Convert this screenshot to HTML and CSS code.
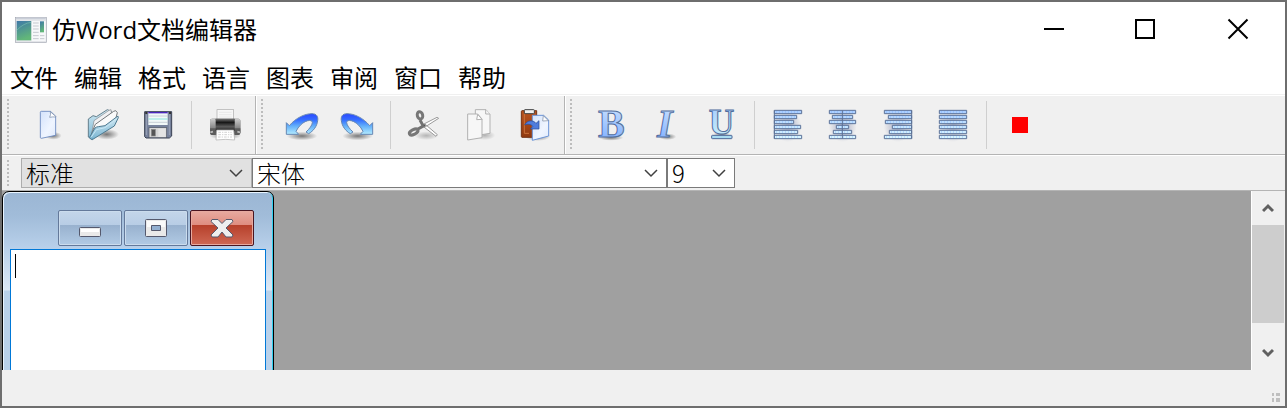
FILE: index.html
```html
<!DOCTYPE html>
<html lang="zh-CN">
<head>
<meta charset="utf-8">
<title>仿Word文档编辑器</title>
<link rel="stylesheet" href="styles.css">
</head>
<body>
<svg class="defs" aria-hidden="true">
  <defs>
    <linearGradient id="paper" x1="0" y1="0" x2="1" y2="1"><stop offset="0" stop-color="#d3e2fb"/><stop offset=".6" stop-color="#eff5ff"/><stop offset="1" stop-color="#dfeafd"/></linearGradient>
    <linearGradient id="folder" x1="0" y1="0" x2="0" y2="1"><stop offset="0" stop-color="#d3eaf4"/><stop offset="1" stop-color="#79b5d2"/></linearGradient>
    <linearGradient id="arrow" x1="0" y1="0" x2="0" y2="1"><stop offset="0" stop-color="#2a48ff"/><stop offset=".3" stop-color="#356dff"/><stop offset=".6" stop-color="#63b0fa"/><stop offset="1" stop-color="#b4ecff"/></linearGradient>
    <linearGradient id="letter" x1="0" y1="0" x2="0" y2="1"><stop offset="0" stop-color="#d0e5ff"/><stop offset="1" stop-color="#76a9ff"/></linearGradient>
    <linearGradient id="letterCyan" x1="0" y1="0" x2="0" y2="1"><stop offset="0" stop-color="#a6caff"/><stop offset="1" stop-color="#c8f2f8"/></linearGradient>
    <linearGradient id="bars" gradientUnits="userSpaceOnUse" x1="0" y1="54" x2="0" y2="140"><stop offset="0" stop-color="#a9cdff"/><stop offset="1" stop-color="#daf7ff"/></linearGradient>
    <linearGradient id="roller" x1="0" y1="0" x2="0" y2="1"><stop offset="0" stop-color="#777"/><stop offset=".3" stop-color="#171717"/><stop offset=".65" stop-color="#5b5b5b"/><stop offset="1" stop-color="#222"/></linearGradient>
    <linearGradient id="rollerEnd" x1="0" y1="0" x2="0" y2="1"><stop offset="0" stop-color="#ccc"/><stop offset="1" stop-color="#555"/></linearGradient>
    <linearGradient id="leather" x1="0" y1="0" x2="0" y2="1"><stop offset="0" stop-color="#b9531f"/><stop offset="1" stop-color="#8f390f"/></linearGradient>
    <linearGradient id="screen" x1="0" y1="0" x2=".3" y2="1"><stop offset="0" stop-color="#3f78a8"/><stop offset="1" stop-color="#62b779"/></linearGradient>
    <radialGradient id="shade"><stop offset="0" stop-color="#000" stop-opacity=".5"/><stop offset="1" stop-color="#000" stop-opacity="0"/></radialGradient>
    <radialGradient id="glow"><stop offset="0" stop-color="#1c2c70" stop-opacity=".35"/><stop offset="1" stop-color="#1c2c70" stop-opacity="0"/></radialGradient>
  </defs>
</svg>
<div class="window">
  <header class="titlebar">
    <svg class="app-icon" viewBox="0 0 96 78" aria-hidden="true">
      <rect x="1" y="1" width="93" height="75" fill="#e3e5e9" stroke="#a2a7b2" stroke-width="2"/>
      <path d="M3 4H92" stroke="#c9ced8" stroke-width="5"/>
      <rect x="5" y="12" width="44" height="58" fill="url(#screen)"/>
      <path d="M5 40Q26 18 49 16" stroke="#7cc3b0" stroke-width="3" fill="none" opacity=".6"/>
      <rect x="50" y="12" width="42" height="60" fill="#f7f8fa"/>
      <path d="M54 18h17M54 27h17M54 36h17M54 46h17M54 56h17M54 65h17M75 56h13M75 65h13" stroke="#c5c9cf" stroke-width="3"/>
      <rect x="75" y="13" width="12" height="33" fill="url(#screen)"/>
    </svg>
    <h1 class="title">仿Word文档编辑器</h1>
    <div class="window-controls">
      <button class="control" aria-label="最小化"><svg viewBox="0 0 24 24"><path d="M1 11h20" /></svg></button>
      <button class="control" aria-label="最大化"><svg viewBox="0 0 24 24"><path d="M1 2h18v18H1z"/></svg></button>
      <button class="control" aria-label="关闭"><svg viewBox="0 0 24 24"><path d="M1.500 1.500l19 19M20.500 1.500l-19 19"/></svg></button>
    </div>
  </header>
  <nav class="menu" aria-label="菜单">
    <button>文件</button><button>编辑</button><button>格式</button><button>语言</button><button>图表</button><button>审阅</button><button>窗口</button><button>帮助</button>
  </nav>

  <div class="toolbar">
    <div class="group">
      <span class="grip"></span>
      <button class="tool" aria-label="新建"><svg viewBox="90 45 105 108">
        <ellipse cx="160" cy="131" rx="25" ry="12" fill="url(#shade)"/>
        <path d="M124 58h28l15 15v57l-43 9q-3 0-3-3V61q0-3 3-3z" fill="url(#paper)" stroke="#6383bd" stroke-width="2.500"/>
        <path d="M151 59q2 9-2 17 9-2 18-1V73z" fill="#fff" stroke="#6b7f9f" stroke-width="2"/>
      </svg></button>
      <button class="tool" aria-label="打开"><svg viewBox="255 45 105 108">
        <ellipse cx="320" cy="127" rx="37" ry="16" fill="url(#shade)"/>
        <path d="M265 81l14-10 10 3 33-21 12 5 4 28-61 57-12-8z" fill="url(#folder)" stroke="#647f8c" stroke-width="3"/>
        <path d="M276 120l6-34 45-31 6-2 5 42z" fill="#f1f1f3" stroke="#82878b" stroke-width="2"/>
        <path d="M274 126l12-29 55-39 6-2 5 6-9 34z" fill="#fafafa" stroke="#73777a" stroke-width="3"/>
        <path d="M268 137l17-29q5-4 10-4l20-3 36-27q5-3 4 3l-12 25-63 39q-7 4-12-4z" fill="url(#folder)" stroke="#4e7a91" stroke-width="3"/>
        <path d="M274 135l15-22 26-6 34-25" stroke="#c8e7f5" stroke-width="3" fill="none"/>
      </svg></button>
      <button class="tool" aria-label="保存"><svg viewBox="420 45 105 108">
        <path d="M434 59h81v73l-7 6h-70l-4-4z" fill="#77829c" stroke="#394052" stroke-width="3"/>
        <rect x="445" y="60" width="58" height="39" fill="#f1f8f8"/>
        <path d="M445 62h58" stroke="#4a25bd" stroke-width="4"/>
        <path d="M445 72h58M445 91h58" stroke="#b5bbc7" stroke-width="2"/><path d="M445 81h58" stroke="#8de2de" stroke-width="3"/>
        <path d="M439 67v62M508 67v62" stroke="#9aa3b9" stroke-width="3"/>
        <rect x="436" y="60" width="6" height="6" fill="#333"/><rect x="507" y="60" width="6" height="6" fill="#333"/>
        <rect x="447" y="107" width="53" height="30" fill="#d6d6d6" stroke="#4e5562" stroke-width="2"/>
        <path d="M475 110h22v25h-22z" fill="#e4e4e4"/><rect x="454" y="112" width="12" height="20" fill="#555" stroke="#8a8a8a" stroke-width="2"/>
      </svg></button>
      <span class="separator"></span>
      <button class="tool" aria-label="打印"><svg viewBox="621 45 105 108">
        <ellipse cx="676" cy="131" rx="48" ry="12" fill="url(#shade)"/>
        <rect x="651" y="53" width="50" height="37" fill="#f7f7f7" stroke="#aaa" stroke-width="2"/>
        <path d="M657 61h38M657 68h38M657 75h38" stroke="#e2e2e2" stroke-width="2"/>
        <rect x="630" y="80" width="91" height="48" rx="6" fill="#555"/>
        <rect x="630" y="80" width="18" height="48" rx="5" fill="url(#rollerEnd)"/><rect x="703" y="80" width="18" height="48" rx="5" fill="url(#rollerEnd)"/>
        <path d="M630 109h91v11q-2 9-9 9h-73q-7 0-9-9z" fill="#5c5c5c"/><path d="M631 121l8-2M720 121l-8-2" stroke="#bbb" stroke-width="5"/>
        <rect x="647" y="80" width="57" height="37" fill="url(#roller)"/>
        <path d="M650 114h51l3 30-27-2-29 2z" fill="#fff" stroke="#aaa" stroke-width="2"/>
        <path d="M655 121h40M655 128h41M654 135h42" stroke="#bcbcbc" stroke-width="2" stroke-dasharray="8 3 4 3"/>
      </svg></button>
    </div>
    <div class="group">
      <span class="grip"></span>
      <button class="tool" aria-label="撤销"><svg viewBox="102 45 105 108">
        <ellipse cx="156" cy="132" rx="46" ry="13" fill="url(#shade)"/>
        <path d="M109 92L118 101C138 77 165 65 186 65C200 65 205 74 203 86C201 103 190 117 176 125L168 120C179 110 186 100 187 92C188 79 155 84 138 118L146 127H109Z" fill="url(#arrow)" stroke="#6687b4" stroke-width="3" stroke-linejoin="round"/>
      </svg></button>
      <button class="tool" aria-label="重做"><svg viewBox="267 45 105 108">
        <ellipse cx="323" cy="132" rx="46" ry="13" fill="url(#shade)"/>
        <path d="M368 92L359 101C339 77 312 65 291 65C277 65 272 74 274 86C276 103 287 117 301 125L309 120C298 110 291 100 290 92C289 79 322 84 339 118L331 127H368Z" fill="url(#arrow)" stroke="#6687b4" stroke-width="3" stroke-linejoin="round"/>
      </svg></button>
      <span class="separator"></span>
      <button class="tool" aria-label="剪切"><svg viewBox="48 45 105 108">
        <ellipse cx="109" cy="131" rx="36" ry="13" fill="url(#shade)" opacity=".5"/>
        <path d="M98 98l43-22 5 3-41 26zM99 103l8-5 35 30-4 5z" fill="#fff" stroke="#9a9a9a" stroke-width="3" stroke-linejoin="round"/>
        <ellipse cx="90" cy="70" rx="8" ry="11" transform="rotate(-15 90 70)" fill="none" stroke="#777" stroke-width="9"/>
        <ellipse cx="71" cy="120" rx="14" ry="7" transform="rotate(-27 71 120)" fill="none" stroke="#777" stroke-width="9"/>
        <path d="M90 84l9 17M84 111l18-10" stroke="#737373" stroke-width="9"/><circle cx="104" cy="100" r="3" fill="#555"/>
      </svg></button>
      <button class="tool" aria-label="复制"><svg viewBox="213 45 105 108">
        <ellipse cx="284" cy="130" rx="32" ry="14" fill="url(#shade)" opacity=".5"/>
        <g fill="#f7f7f7" stroke="#b1b1b1" stroke-width="3"><path d="M256 53h32l12 14v57l-44 7z"/><path d="M287 53v13h13"/><path d="M233 66h30l13 15v56l-43 7z"/><path d="M263 67l-3 16 16-1z" fill="#fff"/></g>
      </svg></button>
      <button class="tool" aria-label="粘贴"><svg viewBox="378 45 105 108">
        <ellipse cx="443" cy="133" rx="38" ry="14" fill="url(#shade)"/>
        <path d="M396 56h44v80h-44q-2 0-2-3V59q0-3 2-3z" fill="url(#leather)" stroke="#733315" stroke-width="3"/>
        <path d="M403 65v59h14" stroke="#ca713b" stroke-width="3" fill="none"/>
        <rect x="403" y="53" width="30" height="12" rx="2" fill="#f0f0f0" stroke="#404040" stroke-width="3"/>
        <path d="M427 70h34l15 14v48l-49 13z" fill="url(#paper)" stroke="#6b95d8" stroke-width="3"/>
        <path d="M460 71l-2 16 17-1z" fill="#fff" stroke="#75859c" stroke-width="2"/>
        <path d="M404 99C411 84 430 83 438 94L447 86V111H421L429 103C422 96 413 95 404 99Z" fill="#4f7cdc" stroke="#294a91" stroke-width="2"/>
      </svg></button>
    </div>
    <div class="group group-last">
      <span class="grip"></span>
      <button class="tool" aria-label="加粗"><svg viewBox="99 45 105 108"><ellipse cx="153" cy="137" rx="37" ry="9" fill="url(#shade)"/><text class="glyph bold" x="114" y="136" fill="url(#letter)">B</text></svg></button>
      <button class="tool" aria-label="斜体"><svg viewBox="264 45 105 108"><ellipse cx="322" cy="134" rx="27" ry="10" fill="url(#shade)"/><text class="glyph bold italic" x="291" y="136" fill="url(#letter)">I</text></svg></button>
      <button class="tool" aria-label="下划线"><svg viewBox="429 45 105 108"><ellipse cx="485" cy="126" rx="24" ry="8" fill="url(#shade)"/><text class="glyph under" x="446" y="125" fill="url(#letterCyan)">U</text><rect x="455" y="130" width="61" height="10" rx="2" fill="#a9dcf2" stroke="#4c6797" stroke-width="3"/></svg></button>
      <span class="separator"></span>
      <button class="tool" aria-label="左对齐"><svg class="align" viewBox="60 45 105 108"><ellipse cx="113" cy="103" rx="42" ry="47" fill="url(#glow)"/><path class="line" d="M73 55h82v10H73zM73 70h67v10H73zM73 85h58v10H73zM73 100h79v10H73zM73 115h70v10H73zM73 130h82v10H73z"/><path class="rule" d="M73 55v85"/><path class="dots" d="M78 60h72M78 75h59M78 90h49M78 105h70M78 120h61M78 135h72"/></svg></button>
      <button class="tool" aria-label="居中"><svg class="align" viewBox="225 45 105 108"><ellipse cx="278" cy="103" rx="42" ry="47" fill="url(#glow)"/><path class="line" d="M238 55h79v10h-79zM247 70h61v10h-61zM238 85h79v10h-79zM259 100h37v10h-37zM250 115h55v10h-55zM238 130h79v10h-79z"/><path class="rule" d="M277 55v85"/><path class="dots" d="M243 60h70M252 75h52M243 90h70M264 105h28M255 120h46M243 135h70"/></svg></button>
      <button class="tool" aria-label="右对齐"><svg class="align" viewBox="390 45 105 108"><ellipse cx="443" cy="103" rx="42" ry="47" fill="url(#glow)"/><path class="line" d="M403 55h82v10h-82zM415 70h70v10h-70zM406 85h79v10h-79zM427 100h58v10h-58zM418 115h67v10h-67zM403 130h82v10h-82z"/><path class="rule" d="M485 55v85"/><path class="dots" d="M408 60h73M420 75h61M411 90h70M432 105h49M423 120h58M408 135h73"/></svg></button>
      <button class="tool" aria-label="两端对齐"><svg class="align" viewBox="555 45 105 108"><ellipse cx="609" cy="103" rx="42" ry="47" fill="url(#glow)"/><path class="line" d="M568 55h82v10h-82zM568 70h82v10h-82zM568 85h82v10h-82zM568 100h82v10h-82zM568 115h82v10h-82zM568 130h82v10h-82z"/><path class="dots" d="M573 60h73M573 75h73M573 90h73M573 105h73M573 120h73M573 135h73"/></svg></button>
      <span class="separator"></span>
      <button class="tool" aria-label="文字颜色"><svg viewBox="756 45 105 108"><path d="M786 75h48v48h-48z" fill="#f00"/></svg></button>
    </div>
  </div>

  <div class="formatbar">
    <span class="grip"></span>
    <label class="combo combo-style"><select aria-label="样式"><option>标准</option></select><svg viewBox="0 0 14 9"><path d="M1 1l6 6 6-6"/></svg></label>
    <label class="combo combo-font"><select aria-label="字体"><option>宋体</option></select><svg viewBox="0 0 14 9"><path d="M1 1l6 6 6-6"/></svg></label>
    <label class="combo combo-size"><select aria-label="字号"><option>9</option></select><svg viewBox="0 0 14 9"><path d="M1 1l6 6 6-6"/></svg></label>
  </div>

  <main class="workspace">
    <div class="mdi">
      <section class="child" aria-label="文档">
        <div class="child-bar">
          <button class="child-button" aria-label="最小化文档"><svg viewBox="0 0 64 36"><rect x="21.500" y="17.500" width="21" height="9" rx="1" fill="#e9e9e9" stroke="#55596d"/><path d="M23 19h18v3H23z" fill="#fff"/></svg></button>
          <button class="child-button" aria-label="最大化文档"><svg viewBox="0 0 64 36"><rect x="21.500" y="9.500" width="21" height="17" rx="1" fill="#e9e9e9" stroke="#55596d"/><path d="M23 11h18v6H23z" fill="#fafafa"/><path d="M27.500 15.500h9v5h-9z" fill="#92afd0" stroke="#55596d"/></svg></button>
          <button class="child-button child-close" aria-label="关闭文档"><svg viewBox="0 0 64 36"><path d="M22 9.500h6l4 4 4-4h6l1 2-7 6.500 7 7-1 2h-6l-4-5-4 5h-6l-1-2 7-7-7-6.500z" fill="#eee" stroke="#55596d"/></svg></button>
        </div>
        <div class="page"><textarea aria-label="文档内容"></textarea><span class="caret"></span></div>
      </section>
    </div>
    <div class="scrollbar">
      <button aria-label="向上滚动"><svg viewBox="0 0 12 10"><path d="M1 8l5-5 5 5"/></svg></button>
      <div class="track"><div class="thumb"></div></div>
      <button aria-label="向下滚动"><svg viewBox="0 0 12 10"><path d="M1 2l5 5 5-5"/></svg></button>
    </div>
  </main>
  <footer class="status">
    <svg viewBox="0 0 8 9" aria-hidden="true"><path d="M0 0h2v3H0zM4 0h4v3H4zM0 5h2v4H0zM4 5h4v4H4z" fill="#bfbfbf"/></svg>
  </footer>
</div>
</body>
</html>
```
FILE: styles.css
```css
* { box-sizing: border-box; }

body {
  margin: 0;
  font-family: "Open Sans", "Noto Sans CJK SC", sans-serif;
  font-size: 24px;
  color: #000;
}

button {
  margin: 0;
  padding: 0;
  border: 0;
  background: none;
  font: inherit;
  color: inherit;
}

svg { display: block; flex: none; }
.defs { position: absolute; width: 0; height: 0; }

.window {
  display: flex;
  flex-direction: column;
  height: 100vh;
  border: 2px solid #6e6e6e;
  background: #f0f0f0;
}

/* Title and menu */
.titlebar {
  display: flex;
  align-items: center;
  height: 56px;
  padding-left: 13px;
  background: #fff;
}
.app-icon { width: 32px; height: 26px; }
.title {
  flex: 1;
  margin: 0 0 0 5px;
  font-size: 24px;
  font-weight: 400;
  line-height: 32px;
  white-space: nowrap;
}
.window-controls { display: flex; height: 100%; }
.control {
  display: flex;
  align-items: center;
  justify-content: center;
  width: 92px;
}
.control svg { width: 24px; height: 24px; fill: none; stroke: #000; stroke-width: 2; }

.menu {
  display: flex;
  gap: 16px;
  padding: 4px 8px 0;
  border-bottom: 1px solid #f0f0f0;
  background: #fff;
}
.menu button { height: 32px; line-height: 32px; }

/* Toolbars */
.toolbar, .formatbar {
  display: flex;
  flex: none;
  border-top: 1px solid #fff;
  border-bottom: 1px solid #b4b4b4;
}
.toolbar { height: 60px; }
.group {
  display: flex;
  padding-right: 3px;
  border-right: 1px solid #b4b4b4;
}
.group + .group { box-shadow: inset 1px 0 #fff; }
.group-last { border-right: 0; }
.grip {
  width: 18px;
  margin: 3px 0;
  background: linear-gradient(#bdbdbd 2px, transparent 2px) 5px 0 / 2px 4px repeat-y;
}
.tool {
  display: flex;
  align-items: center;
  justify-content: center;
  width: 55px;
}
.tool svg { width: 35px; height: 36px; overflow: visible; }
.separator {
  width: 1px;
  margin: 5px 5px 5px 6px;
  background: #cfcfcf;
}
.glyph {
  font-family: "Liberation Serif", serif;
  stroke: #526e9e;
  stroke-width: 3px;
}
.bold { font-size: 120px; font-weight: 700; }
.italic { font-style: italic; }
.under { font-size: 106px; font-weight: 700; }
.align .line { fill: url(#bars); stroke: #5c7298; stroke-width: 3px; }
.align .rule { stroke: #5c7298; stroke-width: 3px; }
.align .dots { stroke: #6fa8ff; stroke-width: 3px; stroke-dasharray: 3 6; opacity: .6; }

.formatbar { height: 36px; }
.formatbar .grip { width: 19px; margin: 4px 0 3px; }
.combo {
  position: relative;
  height: 30px;
  margin-top: 2px;
}
.combo select {
  display: block;
  width: 100%;
  height: 30px;
  padding: 0 4px;
  border: 1px solid #7a7a7a;
  border-radius: 0;
  appearance: none;
  background: #fff;
  color: #000;
  font-family: "Noto Sans CJK SC", sans-serif;
  font-size: 24px;
  font-weight: 300;
  line-height: 28px;
}
.combo svg {
  position: absolute;
  top: 11px;
  right: 9px;
  width: 14px;
  height: 9px;
  fill: none;
  stroke: #404040;
  stroke-width: 1.500px;
  pointer-events: none;
}
.combo-style { width: 231px; }
.combo-style select { border-color: #adadad; background: #e1e1e1; }
.combo-font { width: 415px; }
.combo-size { width: 68px; }

/* Documents */
.workspace { display: flex; flex: 1; min-height: 0; }
.mdi {
  position: relative;
  flex: 1;
  overflow: hidden;
  background: #a0a0a0;
}
.child {
  position: absolute;
  top: 0;
  left: 0;
  display: flex;
  flex-direction: column;
  width: 272px;
  height: 300px;
  padding: 0 7px;
  border: 1px solid #000;
  border-radius: 7px 7px 0 0;
  background: linear-gradient(#9bb6d4, #a1bcd9 24px, #b8d0ea 56px, #dce8f5 98px, #b9d1ea 99px);
  box-shadow: inset 1px 1px #e8f4ff, inset -1px 0 #31d0f0;
}
.child-bar {
  display: flex;
  justify-content: flex-end;
  gap: 2px;
  padding: 18px 12px 3px 0;
}
.child-button {
  width: 64px;
  height: 36px;
  overflow: hidden;
  border: 1px solid #64799a;
  border-radius: 2px;
  background: linear-gradient(#c4d6ea, #b8cde5 14px, #98b1ce 14px, #b1cae4);
  box-shadow: inset 0 0 0 1px #cbdced;
}
.child-button svg { width: 64px; height: 36px; margin: -1px; }
.child-close {
  border-color: #4a1521;
  background: linear-gradient(#e8aaa0, #df8d80 14px, #b6402b 14px, #cf6854);
  box-shadow: inset 0 0 0 1px #e6aaa0;
}
.page { position: relative; display: flex; flex: 1; }
.page textarea {
  flex: 1;
  min-width: 0;
  padding: 4px;
  border: 1px solid #0078d7;
  border-bottom: 0;
  outline: 0;
  resize: none;
  background: #fff;
  font: 24px/24px "Liberation Serif", "Noto Sans CJK SC", serif;
}
.caret {
  position: absolute;
  top: 5px;
  left: 5px;
  width: 1px;
  height: 24px;
  background: #000;
}

.scrollbar {
  display: flex;
  flex-direction: column;
  width: 34px;
  padding-right: 1px;
  border-left: 1px solid #fff;
}
.scrollbar button {
  display: flex;
  align-items: center;
  justify-content: center;
  height: 34px;
}
.scrollbar svg { width: 12px; height: 10px; fill: none; stroke: #606060; stroke-width: 3px; }
.track { flex: 1; }
.thumb { height: 88%; background: #cdcdcd; }

.status {
  display: flex;
  flex: none;
  align-items: flex-end;
  justify-content: flex-end;
  height: 36px;
  padding: 4px 5px;
}
.status svg { width: 8px; height: 9px; }
```
